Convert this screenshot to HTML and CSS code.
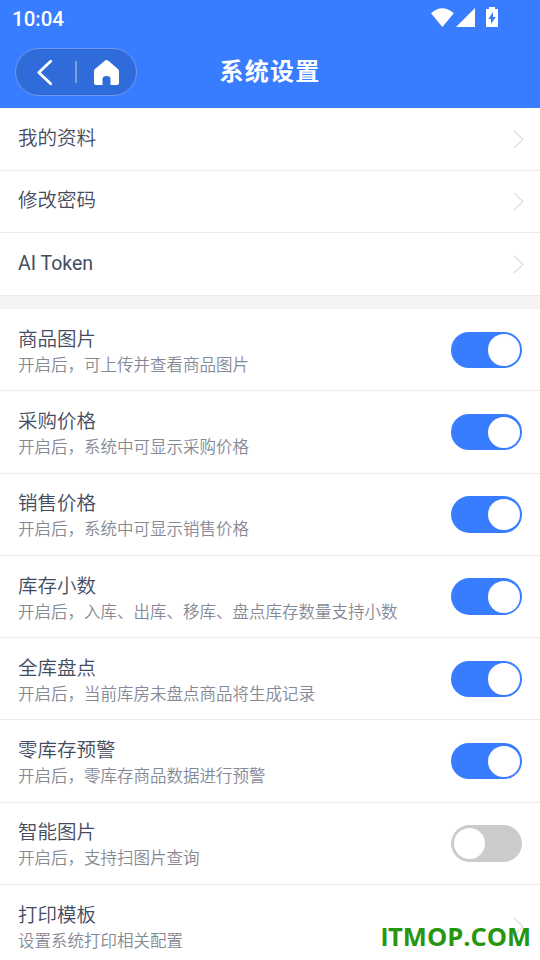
FILE: index.html
```html
<!DOCTYPE html>
<html lang="zh-CN">
<head>
<meta charset="utf-8">
<title>系统设置</title>
<link rel="stylesheet" href="styles.css">
</head>
<body>
<header class="header">
  <div class="status">
    <span class="time">10:04</span>
    <svg class="status-icons" width="70" height="22" viewBox="0 0 70 22" fill="#fff">
      <path d="M1 5.300Q12.200-4.600 23.800 5.300L12.400 19Z"/>
      <path d="M45 0V19H26Z"/>
      <path fill-rule="evenodd" d="M59-1h6V1h3V19H56V1h3ZM63 4l-4.600 7H61v5l4.800-7H63Z"/>
    </svg>
  </div>
  <div class="navbar">
    <div class="capsule">
      <svg width="120" height="46" viewBox="0 0 120 46">
        <path d="M34.700 12.300 22.800 23.400l11.900 11.400" fill="none" stroke="#fff" stroke-width="2.800" stroke-linecap="round" stroke-linejoin="round"/>
        <path d="M60 12v22" stroke="#7c9fe6" stroke-width="2"/>
        <path d="M89 11.600q1.500-1.200 3 0l10 8.400q1 .9 1 2.100V34q0 2-2 2h-6.500v-6q0-3-4-3t-4 3v6H80q-2 0-2-2V22.100q0-1.200 1-2.100Z" fill="#fff"/>
      </svg>
    </div>
    <h1 class="title">系统设置</h1>
  </div>
</header>
<main>
  <section class="links">
    <div class="link"><span>我的资料</span><svg class="arrow" viewBox="0 0 12 20"><path d="m2 2 9 8.500-9 8.500"/></svg></div>
    <div class="link"><span>修改密码</span><svg class="arrow" viewBox="0 0 12 20"><path d="m2 2 9 8.500-9 8.500"/></svg></div>
    <div class="link latin"><span>AI Token</span><svg class="arrow" viewBox="0 0 12 20"><path d="m2 2 9 8.500-9 8.500"/></svg></div>
  </section>
  <section class="options">
    <div class="option"><div class="text"><div class="name">商品图片</div><div class="desc">开启后，可上传并查看商品图片</div></div><div class="switch on"></div></div>
    <div class="option"><div class="text"><div class="name">采购价格</div><div class="desc">开启后，系统中可显示采购价格</div></div><div class="switch on"></div></div>
    <div class="option"><div class="text"><div class="name">销售价格</div><div class="desc">开启后，系统中可显示销售价格</div></div><div class="switch on"></div></div>
    <div class="option"><div class="text"><div class="name">库存小数</div><div class="desc">开启后，入库、出库、移库、盘点库存数量支持小数</div></div><div class="switch on"></div></div>
    <div class="option"><div class="text"><div class="name">全库盘点</div><div class="desc">开启后，当前库房未盘点商品将生成记录</div></div><div class="switch on"></div></div>
    <div class="option"><div class="text"><div class="name">零库存预警</div><div class="desc">开启后，零库存商品数据进行预警</div></div><div class="switch on"></div></div>
    <div class="option"><div class="text"><div class="name">智能图片</div><div class="desc">开启后，支持扫图片查询</div></div><div class="switch"></div></div>
    <div class="option"><div class="text"><div class="name">打印模板</div><div class="desc">设置系统打印相关配置</div></div><svg class="arrow" viewBox="0 0 12 20"><path d="m2 2 9 8.500-9 8.500"/></svg></div>
  </section>
</main>
<div class="watermark"><span class="plain">I</span>TMOP.COM</div>
</body>
</html>
```

FILE: styles.css
```css
* { box-sizing: border-box; }
html, body { margin: 0; height: 960px; overflow: hidden; }
body {
  position: relative;
  width: 540px;
  background: #fff;
  color: #454c5f;
  font-family: Roboto, "Noto Sans CJK SC", sans-serif;
}
.header { height: 108px; background: #387dff; color: #fff; }
.status { display: flex; justify-content: space-between; height: 38px; padding: 8px 40px 0 12px; }
.time { font-size: 20.5px; line-height: 22px; font-weight: 500; }
.status-icons { overflow: visible; }
.navbar { display: grid; grid-template-columns: 122px 1fr 122px; padding: 10px 15px 0; }
.capsule {
  width: 122px;
  height: 48px;
  border: 1px solid #6f98ea;
  border-radius: 24px;
  background: #306bda;
}
.capsule svg { display: block; }
.title { margin: 0; text-align: center; font-size: 24px; line-height: 48px; font-weight: 700; letter-spacing: 1.2px; }
.links { height: 201px; border-bottom: 13.5px solid #f4f4f4; }
.link {
  display: flex;
  align-items: center;
  justify-content: space-between;
  height: 62.5px;
  padding: 0 16px 2px 18px;
  border-bottom: 1px solid #ededed;
  font-size: 19.5px;
}
.link span { line-height: 28px; margin-top: 1.8px; font-weight: 350; }
.link.latin span { margin-top: 2.5px; font-weight: 400; }
.arrow { width: 12px; height: 20px; margin-top: 2px; fill: none; stroke: #dcdcdc; stroke-width: 1.1; }
.option {
  display: flex;
  justify-content: space-between;
  align-items: center;
  height: 82.25px;
  padding: 0 18px;
  border-bottom: 1px solid #ededed;
}
.option .arrow { margin-right: -2px; }
.text { padding-top: 4.5px; font-weight: 350; }
.name { font-size: 19.5px; line-height: 27px; }
.desc { font-size: 16.5px; line-height: 25px; color: #858995; }
.switch {
  display: flex;
  width: 71px;
  height: 36.5px;
  margin-top: .25px;
  padding: 2.75px;
  border-radius: 19px;
  background: #cbcbcb;
}
.switch::before { content: ""; width: 31.5px; height: 31.5px; border-radius: 50%; background: #fff; }
.switch.on { justify-content: flex-end; padding-right: 2px; background: #387dff; }
.switch.on::before { width: 32px; }
.watermark {
  position: absolute;
  left: 381px;
  top: 919px;
  color: #27960f;
  font: 700 25.5px/34px "Open Sans", sans-serif;
}
.plain { font-family: "Liberation Sans", sans-serif; }
```
